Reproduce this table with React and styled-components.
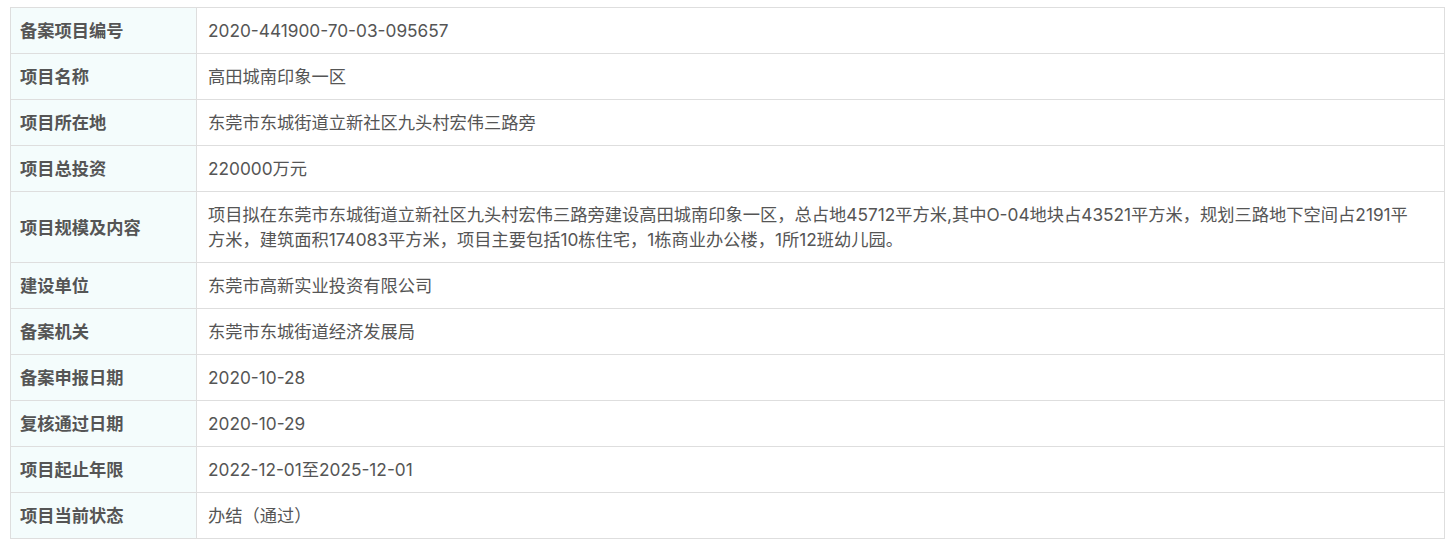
import React from "react"
import styled, { createGlobalStyle } from "styled-components"

const GlobalStyle = createGlobalStyle`
  body {
    margin: 0;
    background: #fff;
    font-family: Inter, "Noto Sans CJK SC", sans-serif;
  }
`

const Wrap = styled.div`
  padding: 7px 11px 0 10px;
`

const Table = styled.table`
  width: 100%;
  border-collapse: collapse;
  font-size: 17.25px;
  line-height: 25px;
  color: #555;
`

const Label = styled.th`
  width: 165px;
  padding: 10px 11px 10px 9px;
  background: #f4fcfc;
  border: 1px solid #dedede;
  font-weight: bold;
  text-align: left;
  vertical-align: middle;
  color: #555;
`

const Value = styled.td`
  padding: 10px 24px 10px 11px;
  border: 1px solid #dedede;
  vertical-align: middle;
  color: #555;
`

const rows = [
  ["备案项目编号", "2020-441900-70-03-095657"],
  ["项目名称", "高田城南印象一区"],
  ["项目所在地", "东莞市东城街道立新社区九头村宏伟三路旁"],
  ["项目总投资", "220000万元"],
  [
    "项目规模及内容",
    "项目拟在东莞市东城街道立新社区九头村宏伟三路旁建设高田城南印象一区，总占地45712平方米,其中O-04地块占43521平方米，规划三路地下空间占2191平方米，建筑面积174083平方米，项目主要包括10栋住宅，1栋商业办公楼，1所12班幼儿园。",
  ],
  ["建设单位", "东莞市高新实业投资有限公司"],
  ["备案机关", "东莞市东城街道经济发展局"],
  ["备案申报日期", "2020-10-28"],
  ["复核通过日期", "2020-10-29"],
  ["项目起止年限", "2022-12-01至2025-12-01"],
  ["项目当前状态", "办结（通过）"],
]

export default function App() {
  return (
    <>
      <GlobalStyle />
      <Wrap>
        <Table>
          <tbody>
            {rows.map(([k, v]) => (
              <tr key={k}>
                <Label>{k}</Label>
                <Value>{v}</Value>
              </tr>
            ))}
          </tbody>
        </Table>
      </Wrap>
    </>
  )
}
